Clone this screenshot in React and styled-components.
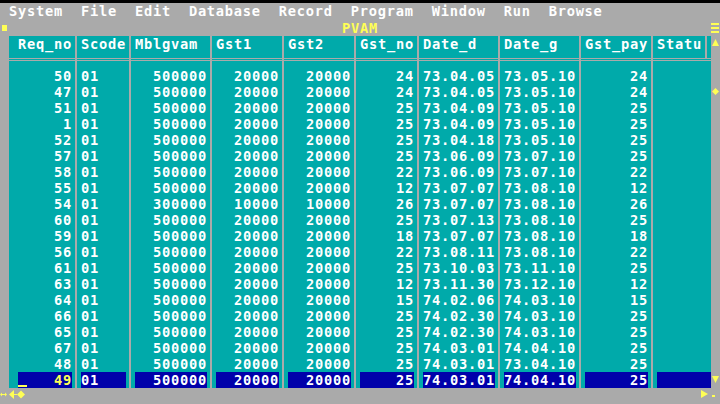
import React from "react";
import styled, { createGlobalStyle } from "styled-components";

const GRAY = "#aaaaaa";
const TEAL = "#00aaaa";
const BLUE = "#0000aa";
const YELLOW = "#ffff55";
const WHITE = "#ffffff";
const CH = 9;

const GlobalStyle = createGlobalStyle`
  html, body {
    margin: 0;
    padding: 0;
    background: ${GRAY};
  }
  body {
    font-family: "DejaVu Sans Mono", "Liberation Mono", monospace;
    font-weight: bold;
    font-size: 13.7px;
    letter-spacing: 0.75px;
  }
`;

const columns = [
  { title: "Req_no", chars: 6, align: "right", padL: 9, padR: 3 },
  { title: "Scode", chars: 5, align: "left", padL: 4, padR: 3 },
  { title: "Mblgvam", chars: 8, align: "right", padL: 4, padR: 3 },
  { title: "Gst1", chars: 7, align: "right", padL: 4, padR: 3 },
  { title: "Gst2", chars: 7, align: "right", padL: 4, padR: 3 },
  { title: "Gst_no", chars: 6, align: "right", padL: 4, padR: 3 },
  { title: "Date_d", chars: 8, align: "left", padL: 4, padR: 3 },
  { title: "Date_g", chars: 8, align: "left", padL: 4, padR: 3 },
  { title: "Gst_pay", chars: 7, align: "right", padL: 4, padR: 3 },
  { title: "Statu", chars: 6, align: "left", padL: 4, padR: 0, split: true },
];

const rows = [
  ["50", "01", "500000", "20000", "20000", "24", "73.04.05", "73.05.10", "24", ""],
  ["47", "01", "500000", "20000", "20000", "24", "73.04.05", "73.05.10", "24", ""],
  ["51", "01", "500000", "20000", "20000", "25", "73.04.09", "73.05.10", "25", ""],
  ["1", "01", "500000", "20000", "20000", "25", "73.04.09", "73.05.10", "25", ""],
  ["52", "01", "500000", "20000", "20000", "25", "73.04.18", "73.05.10", "25", ""],
  ["57", "01", "500000", "20000", "20000", "25", "73.06.09", "73.07.10", "25", ""],
  ["58", "01", "500000", "20000", "20000", "22", "73.06.09", "73.07.10", "22", ""],
  ["55", "01", "500000", "20000", "20000", "12", "73.07.07", "73.08.10", "12", ""],
  ["54", "01", "300000", "10000", "10000", "26", "73.07.07", "73.08.10", "26", ""],
  ["60", "01", "500000", "20000", "20000", "25", "73.07.13", "73.08.10", "25", ""],
  ["59", "01", "500000", "20000", "20000", "18", "73.07.07", "73.08.10", "18", ""],
  ["56", "01", "500000", "20000", "20000", "22", "73.08.11", "73.08.10", "22", ""],
  ["61", "01", "500000", "20000", "20000", "25", "73.10.03", "73.11.10", "25", ""],
  ["63", "01", "500000", "20000", "20000", "12", "73.11.30", "73.12.10", "12", ""],
  ["64", "01", "500000", "20000", "20000", "15", "74.02.06", "74.03.10", "15", ""],
  ["66", "01", "500000", "20000", "20000", "25", "74.02.30", "74.03.10", "25", ""],
  ["65", "01", "500000", "20000", "20000", "25", "74.02.30", "74.03.10", "25", ""],
  ["67", "01", "500000", "20000", "20000", "25", "74.03.01", "74.04.10", "25", ""],
  ["48", "01", "500000", "20000", "20000", "25", "74.03.01", "73.04.10", "25", ""],
  ["49", "01", "500000", "20000", "20000", "25", "74.03.01", "74.04.10", "25", ""],
];

const SELECTED = rows.length - 1;

const menu = ["System", "File", "Edit", "Database", "Record", "Program", "Window", "Run", "Browse"];

const App = () => {
  return (
    <Screen>
      <GlobalStyle />
      <TopEdge />
      <MenuBar>
        {menu.map((item) => (
          <MenuItem key={item}>{item}</MenuItem>
        ))}
      </MenuBar>
      <TitleBar>
        <CloseBox />
        <Title>PVAM</Title>
        <svg width="8" height="10" viewBox="0 0 8 10">
          <rect x="0" y="0" width="8" height="2" fill={YELLOW} />
          <rect x="0" y="4" width="8" height="2" fill={YELLOW} />
          <rect x="0" y="8" width="8" height="2" fill={YELLOW} />
        </svg>
      </TitleBar>
      <Main>
        <Gutter />
        <Table>
          {columns.map((col, ci) => (
            <Column key={col.title} $width={col.padL + col.chars * CH + col.padR}>
              <HeaderCell>
                <HeaderLabel $padL={col.padL}>{col.title}</HeaderLabel>
                {col.split && <HeaderStrip />}
              </HeaderCell>
              <Rule />
              <Body>
                {rows.map((row, ri) => (
                  <Line key={ri} $padL={col.padL} $padR={col.padR}>
                    <Field
                      $chars={col.chars}
                      $align={col.align}
                      $selected={ri === SELECTED}
                      $accent={ri === SELECTED && ci === 0}
                    >
                      {row[ci]}
                      {ri === SELECTED && ci === 0 && <Cursor />}
                    </Field>
                  </Line>
                ))}
              </Body>
            </Column>
          ))}
        </Table>
        <ScrollBar>
          <svg width="7" height="7" viewBox="0 0 7 7" style={{ marginTop: 3 }}>
            <polygon points="3.5,0 7,7 0,7" fill={YELLOW} />
          </svg>
          <svg width="7" height="7" viewBox="0 0 7 7" style={{ marginTop: 42 }}>
            <polygon points="3.5,0 7,3.5 3.5,7 0,3.5" fill={YELLOW} />
          </svg>
          <svg width="7" height="7" viewBox="0 0 7 7" style={{ marginTop: "auto", marginBottom: 5 }}>
            <polygon points="0,0 7,0 3.5,7" fill={YELLOW} />
          </svg>
        </ScrollBar>
      </Main>
      <StatusBar>
        <svg width="26" height="9" viewBox="0 0 26 9">
          <polygon points="0,4.5 2,2.5 2,6.5" fill={YELLOW} />
          <rect x="2" y="4" width="3" height="1" fill={YELLOW} />
          <polygon points="7,4.5 5,2.5 5,6.5" fill={YELLOW} />
          <polygon points="9,4.5 14,0 14,9" fill={YELLOW} />
          <rect x="14" y="4" width="3" height="1" fill={YELLOW} />
          <polygon points="21,0.5 25,4.5 21,8.5 17,4.5" fill={YELLOW} />
        </svg>
        <svg width="15" height="9" viewBox="0 0 15 9">
          <polygon points="0,0 7,4 0,8" fill={YELLOW} />
          <rect x="11" y="5" width="3" height="2" fill={YELLOW} />
        </svg>
      </StatusBar>
    </Screen>
  );
};

const Screen = styled.div`
  width: 720px;
  height: 404px;
  background: ${GRAY};
  display: flex;
  flex-direction: column;
  overflow: hidden;
`;

const TopEdge = styled.div`
  height: 3px;
  background: #000000;
`;

const MenuBar = styled.div`
  height: 17px;
  display: flex;
  gap: ${CH * 2}px;
  padding-left: ${CH}px;
  line-height: 16px;
  color: ${WHITE};
`;

const MenuItem = styled.span`
  white-space: pre;
`;

const TitleBar = styled.div`
  height: 16px;
  display: grid;
  grid-template-columns: 9px 1fr 9px;
  align-items: center;
`;

const CloseBox = styled.div`
  width: 5px;
  height: 6px;
  margin-left: 2px;
  background: ${YELLOW};
`;

const Title = styled.div`
  text-align: center;
  color: ${YELLOW};
  line-height: 16px;
`;

const Main = styled.div`
  height: 352px;
  display: flex;
`;

const Gutter = styled.div`
  width: ${CH}px;
`;

const Table = styled.div`
  display: flex;
  gap: 2px;
`;

const Column = styled.div`
  width: ${(p) => p.$width}px;
  display: flex;
  flex-direction: column;
`;

const HeaderCell = styled.div`
  height: 22px;
  display: flex;
`;

const HeaderLabel = styled.div`
  flex: 1;
  background: ${TEAL};
  color: ${WHITE};
  line-height: 16px;
  padding-left: ${(p) => p.$padL}px;
  white-space: pre;
  overflow: hidden;
`;

const HeaderStrip = styled.div`
  width: 4px;
  border-left: 2px solid ${GRAY};
  background: ${TEAL};
`;

const Rule = styled.div`
  height: 1px;
  margin: 1px 0;
  background: ${TEAL};
`;

const Body = styled.div`
  flex: 1;
  background: ${TEAL};
  padding-top: 7px;
  display: flex;
  flex-direction: column;
`;

const Line = styled.div`
  height: 16px;
  padding: 0 ${(p) => p.$padR}px 0 ${(p) => p.$padL}px;
`;

const Field = styled.div`
  position: relative;
  width: ${(p) => p.$chars * CH}px;
  height: 16px;
  line-height: 16px;
  text-align: ${(p) => p.$align};
  white-space: pre;
  background: ${(p) => (p.$selected ? BLUE : "transparent")};
  color: ${(p) => (p.$accent ? YELLOW : WHITE)};
`;

const Cursor = styled.span`
  position: absolute;
  left: 0;
  bottom: 1px;
  width: ${CH}px;
  height: 2px;
  background: ${YELLOW};
`;

const ScrollBar = styled.div`
  width: ${CH}px;
  display: flex;
  flex-direction: column;
  align-items: center;
`;

const StatusBar = styled.div`
  height: 16px;
  display: flex;
  justify-content: space-between;
  align-items: flex-start;
  padding: 2px 4px 0 0;
  box-sizing: border-box;
`;

export default App;
